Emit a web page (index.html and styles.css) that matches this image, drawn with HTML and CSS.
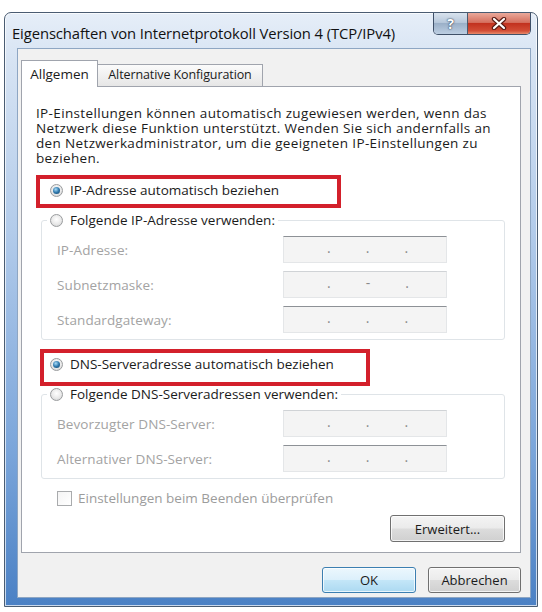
FILE: index.html
```html
<!DOCTYPE html>
<html lang="de">
<head>
  <meta charset="UTF-8">
  <meta name="viewport" content="width=device-width, initial-scale=1.0">
  <title>Eigenschaften von Internetprotokoll Version 4 (TCP/IPv4)</title>
  <link rel="stylesheet" href="styles.css">
</head>
<body>
  <div class="window">
    <div class="titlebar">
      <span class="title">Eigenschaften von Internetprotokoll Version 4 (TCP/IPv4)</span>
      <div class="caption">
        <span class="cap help">?</span>
        <span class="cap close">
          <svg width="16" height="13" viewBox="0 0 16 13">
            <path d="M3 2 L13 11 M13 2 L3 11" stroke="#5b1d16" stroke-width="4.4" stroke-linecap="round"/>
            <path d="M3 2 L13 11 M13 2 L3 11" stroke="#fff" stroke-width="2.2" stroke-linecap="round"/>
          </svg>
        </span>
      </div>
    </div>

    <div class="client">
      <div class="tabs">
        <div class="tab active">Allgemen</div>
        <div class="tab">Alternative Konfiguration</div>
      </div>

      <div class="panel">
        <p class="intro">IP-Einstellungen können automatisch zugewiesen werden, wenn das<br>
          Netzwerk diese Funktion unterstützt. Wenden Sie sich andernfalls an<br>
          den Netzwerkadministrator, um die geeigneten IP-Einstellungen zu<br>
          beziehen.</p>

        <div class="radio-row mark mark-ip"><span class="radio on"></span>IP-Adresse automatisch beziehen</div>

        <fieldset class="group">
          <legend class="radio-row"><span class="radio"></span>Folgende IP-Adresse verwenden:</legend>
          <div class="field"><span class="label">IP-Adresse:</span><div class="ipbox dark"><span>.</span><span>.</span><span>.</span></div></div>
          <div class="field"><span class="label">Subnetzmaske:</span><div class="ipbox"><span>.</span><span>-</span><span>.</span></div></div>
          <div class="field"><span class="label">Standardgateway:</span><div class="ipbox dark"><span>.</span><span>.</span><span>.</span></div></div>
        </fieldset>

        <div class="radio-row mark mark-dns"><span class="radio on"></span>DNS-Serveradresse automatisch beziehen</div>

        <fieldset class="group">
          <legend class="radio-row"><span class="radio"></span>Folgende DNS-Serveradressen verwenden:</legend>
          <div class="field"><span class="label">Bevorzugter DNS-Server:</span><div class="ipbox"><span>.</span><span>.</span><span>.</span></div></div>
          <div class="field"><span class="label">Alternativer DNS-Server:</span><div class="ipbox dark"><span>.</span><span>.</span><span>.</span></div></div>
        </fieldset>

        <div class="check-row"><span class="checkbox"></span>Einstellungen beim Beenden überprüfen</div>

        <button class="btn btn-more">Erweitert...</button>
      </div>

      <div class="actions">
        <button class="btn btn-ok">OK</button>
        <button class="btn btn-cancel">Abbrechen</button>
      </div>
    </div>
  </div>
</body>
</html>
```

FILE: styles.css
```css
body {
  margin: 0;
  background: #fff;
  font-family: "Open Sans", "Noto Sans", sans-serif;
  font-size: 13.5px;
  color: #1b1b1b;
}

/* aero frame */
.window {
  margin: 12px 0 0 4px;
  width: 534px;
  height: 595px;
  box-sizing: border-box;
  display: flex;
  flex-direction: column;
  padding: 0 6px 8px 12px;
  border: 1px solid #4a5c72;
  border-radius: 7px 7px 0 0;
  background: linear-gradient(180deg, #e6eef8 0, #d6e3f3 50px, #b2cbea 220px, #7aa5da 440px, #4a80c4 595px);
  box-shadow: inset 0 0 0 1px rgba(255, 255, 255, .7);
}
.titlebar {
  height: 35px;
  margin-left: -5px;
  display: flex;
  justify-content: space-between;
  align-items: flex-start;
}
.title {
  margin-top: 10px;
  line-height: 20px;
  font-size: 14.8px;
  letter-spacing: -.1px;
  color: #111;
  white-space: nowrap;
}
.caption {
  display: flex;
  height: 21px;
  border: 1px solid #3f5068;
  border-top: none;
  border-radius: 0 0 5px 5px;
  overflow: hidden;
}
.cap {
  display: flex;
  align-items: center;
  justify-content: center;
}
.help {
  width: 33px;
  border-right: 1px solid #4a5a6e;
  background: linear-gradient(180deg, #d9e3ee 0, #b7c8db 45%, #9bb0c8 50%, #bccee2 100%);
  color: #fff;
  font-weight: bold;
  font-size: 14px;
  text-shadow: 0 0 2px #2c3e55, 0 0 1px #2c3e55;
}
.close {
  width: 62px;
  background: linear-gradient(180deg, #eaa99b 0, #d5705f 45%, #c2321f 50%, #d24d36 85%, #e88a6b 100%);
}

.client {
  flex: 1;
  display: flex;
  flex-direction: column;
  padding: 11px 9px 4px 3px;
  border: 1px solid #8ea6c3;
  background: #f1f1f1;
}

/* tabs */
.tabs {
  display: flex;
  align-items: flex-end;
  height: 26px;
  position: relative;
  z-index: 1;
}
.tab {
  box-sizing: border-box;
  height: 22px;
  padding-top: 1px;
  text-align: center;
  border: 1px solid #a0a4ad;
  border-bottom: none;
  background: linear-gradient(180deg, #fbfbfb, #e6e6e6);
  white-space: nowrap;
}
.tab.active {
  width: 77px;
  height: 27px;
  margin-bottom: -1px;
  padding-top: 4px;
  font-size: 13.5px;
  background: #fff;
}
.tab + .tab {
  width: 166px;
  margin-left: -1px;
  font-size: 12.5px;
  letter-spacing: -.1px;
}

.panel {
  flex: 1;
  display: flex;
  flex-direction: column;
  padding: 19px 15px 0 14px;
  border: 1px solid #a0a4ad;
  background: #fff;
}
.intro {
  margin: 0;
  line-height: 15px;
  white-space: nowrap;
  letter-spacing: .35px;
}

/* radio rows */
.radio-row {
  display: flex;
  align-items: center;
  gap: 7px;
  line-height: 17px;
  white-space: nowrap;
}
.panel > .radio-row {
  padding-left: 14px;
}
.mark-ip {
  margin-top: 16px;
}
.mark-dns {
  margin-top: 16px;
}
.radio {
  flex: none;
  width: 11px;
  height: 11px;
  border: 1px solid #9a9c9e;
  border-radius: 50%;
  background: radial-gradient(circle at 50% 40%, #fff 0, #e9e9e9 55%, #c9cbcd 100%);
  display: flex;
  align-items: center;
  justify-content: center;
}
.radio.on::after {
  content: "";
  width: 7px;
  height: 7px;
  border-radius: 50%;
  background: radial-gradient(circle at 40% 35%, #a9dcf8 0, #2f78ac 50%, #123f63 100%);
}

/* red highlight frames */
.mark {
  position: relative;
}
.mark::after {
  content: "";
  position: absolute;
  z-index: 2;
  border: 4px solid #d3202b;
  pointer-events: none;
}
.mark-ip::after {
  left: 0;
  top: -7px;
  width: 297px;
  height: 25px;
}
.mark-dns::after {
  left: 4px;
  top: -7px;
  width: 322px;
  height: 29px;
}

/* group boxes */
.group {
  margin: 13px 0 0 5px;
  padding: 0 0 6px 5px;
  border: 1px solid #dfe4e8;
  border-radius: 3px;
  min-width: 0;
}
.group legend {
  padding: 0 3px;
}
.field {
  display: flex;
  align-items: center;
  margin: 7px 0 0 10px;
  color: #a3a3a3;
}
.field + .field {
  margin-top: 8px;
}
.label {
  width: 226px;
  letter-spacing: .1px;
  white-space: nowrap;
}
.ipbox {
  box-sizing: border-box;
  width: 164px;
  height: 27px;
  display: flex;
  align-items: center;
  gap: 35px;
  padding: 0 0 4px 43px;
  border: 1px solid #e4e6e8;
  border-top-color: #d0d3d6;
  background: #f4f4f4;
  color: #8a8a8a;
  font-size: 14px;
}
.ipbox.dark {
  border-top-color: #8d9196;
}

.check-row {
  display: flex;
  align-items: center;
  gap: 6px;
  margin-top: 11px;
  padding-left: 21px;
  line-height: 16px;
  color: #9c9c9c;
  white-space: nowrap;
}
.checkbox {
  flex: none;
  width: 13px;
  height: 13px;
  border: 1px solid #a9abad;
  background: linear-gradient(135deg, #f4f4f4, #fff);
}

/* push buttons */
.btn {
  box-sizing: border-box;
  height: 26px;
  padding: 0;
  font-family: inherit;
  font-size: 13px;
  color: #1b1b1b;
  border: 1px solid #707070;
  border-radius: 3px;
  background: linear-gradient(180deg, #f4f4f4 0, #ebebeb 48%, #dcdcdc 52%, #d0d0d0 100%);
  box-shadow: inset 0 0 0 1px rgba(255, 255, 255, .75);
}
.btn-more {
  align-self: flex-end;
  width: 115px;
  height: 27px;
  margin-top: 9px;
}
.actions {
  display: flex;
  justify-content: flex-end;
  gap: 12px;
  margin-top: 14px;
}
.btn-ok {
  width: 94px;
  border-color: #3c7fb1;
  background: linear-gradient(180deg, #ecf7fd 0, #dcf0fb 48%, #c3e6f8 52%, #acd9f1 100%);
}
.btn-cancel {
  width: 93px;
}
```
